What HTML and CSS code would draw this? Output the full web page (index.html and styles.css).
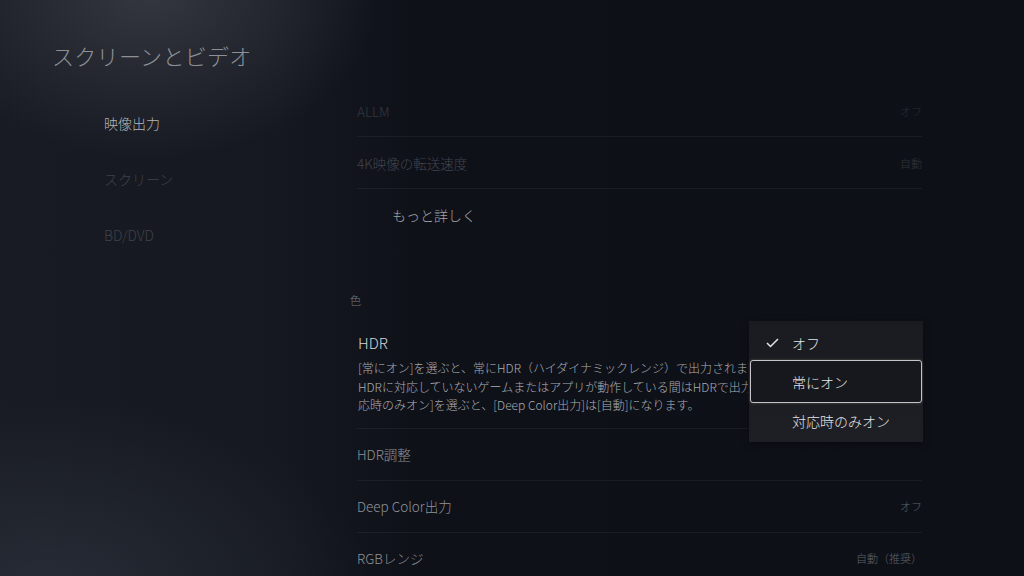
FILE: index.html
```html
<!DOCTYPE html>
<html lang="ja">
<head>
  <meta charset="UTF-8" />
  <meta name="viewport" content="width=device-width, initial-scale=1.0"/>
  <title>スクリーンとビデオ</title>
  <link rel="stylesheet" href="styles.css">
</head>
<body>

  <!-- Left side: title and sections -->
  <aside class="sidebar">
    <h1 class="page-title">スクリーンとビデオ</h1>
    <nav class="side-nav">
      <div class="side-item active">映像出力</div>
      <div class="side-item">スクリーン</div>
      <div class="side-item">BD/DVD</div>
    </nav>
  </aside>

  <!-- Settings list -->
  <main class="settings">
    <div class="row faded-2">
      <span class="label">ALLM</span>
      <span class="value">オフ</span>
    </div>
    <div class="row faded-1">
      <span class="label">4K映像の転送速度</span>
      <span class="value">自動</span>
    </div>
    <div class="row more">
      <span class="label">もっと詳しく</span>
    </div>

    <div class="section-title">色</div>

    <div class="hdr-block">
      <div class="hdr-title">HDR</div>
      <p class="hdr-desc">[常にオン]を選ぶと、常にHDR（ハイダイナミックレンジ）で出力されます。<br>HDRに対応していないゲームまたはアプリが動作している間はHDRで出力されません。[対<br>応時のみオン]を選ぶと、[Deep Color出力]は[自動]になります。</p>

      <!-- HDR dropdown -->
      <div class="dropdown">
        <div class="option checked">
          <svg class="check" width="13" height="10" viewBox="0 0 13 10">
            <polyline points="1,5 4.5,8.5 12,1" fill="none" stroke="#e4e4e6" stroke-width="1.5"/>
          </svg>
          オフ
        </div>
        <div class="option selected">常にオン</div>
        <div class="option">対応時のみオン</div>
      </div>
    </div>

    <div class="row">
      <span class="label">HDR調整</span>
    </div>
    <div class="row">
      <span class="label">Deep Color出力</span>
      <span class="value">オフ</span>
    </div>
    <div class="row">
      <span class="label">RGBレンジ</span>
      <span class="value">自動（推奨）</span>
    </div>
  </main>

</body>
</html>
```

FILE: styles.css
```css
html, body {
  height: 100%;
}

body {
  margin: 0;
  overflow: hidden;
  display: flex;
  font-family: "Noto Sans CJK JP", "Noto Sans", sans-serif;
  font-weight: 300;
  color: #8e9197;
  background:
    radial-gradient(ellipse 230px 170px at 150px -10px, rgba(78, 80, 88, 0.55), transparent),
    radial-gradient(ellipse 320px 190px at 50px 590px, rgba(52, 58, 70, 0.55), transparent),
    linear-gradient(to right, #181b23 0, #151820 280px, #0f1119 420px, #0e1018 100%);
}

/* ---------- sidebar ---------- */

.sidebar {
  width: 340px;
  flex-shrink: 0;
}

.page-title {
  margin: 40px 0 0 52px;
  font-size: 22px;
  font-weight: 300;
  line-height: 30px;
  color: #8d9098;
  letter-spacing: 0.3px;
}

.side-nav {
  margin: 42px 0 0 104px;
  display: flex;
  flex-direction: column;
  gap: 34px;
}

.side-item {
  font-size: 14px;
  line-height: 22px;
  color: #3f424a;
}

.side-item.active {
  color: #b3b6bb;
}

/* ---------- settings list ---------- */

.settings {
  width: 565px;
  margin-left: 17px;
  padding-top: 85px;
}

.row {
  height: 51px;
  display: flex;
  align-items: center;
  justify-content: space-between;
  border-bottom: 1px solid rgba(255, 255, 255, 0.05);
}

.label {
  font-size: 13.5px;
  color: #8e9197;
}

.value {
  font-size: 11px;
  color: #5d6066;
}

.faded-2 .label { color: #34363e; }
.faded-2 .value { color: #2a2c33; }
.faded-1 .label { color: #42444c; }
.faded-1 .value { color: #33353c; }

.row.more {
  border-bottom: none;
  padding-left: 35px;
}

.row.more .label {
  font-size: 14px;
  color: #a2a5aa;
}

.section-title {
  margin: 52px 0 0 -7px;
  font-size: 11px;
  line-height: 16px;
  color: #74777d;
}

/* ---------- HDR block ---------- */

.hdr-block {
  position: relative;
  margin-top: 16px;
  padding: 8px 0 13px 1px;
  border-bottom: 1px solid rgba(255, 255, 255, 0.05);
}

.hdr-title {
  font-size: 15px;
  line-height: 22px;
  color: #d3d5d9;
}

.hdr-desc {
  width: 390px;
  margin: 5px 0 0;
  font-size: 12px;
  line-height: 18.5px;
  color: #a9acb1;
  white-space: nowrap;
  overflow: hidden;
}

.dropdown {
  position: absolute;
  top: -3px;
  right: -1px;
  width: 174px;
  padding: 2px 0;
  box-sizing: border-box;
  background: linear-gradient(to bottom, #1a1b20, #1e1f24);
  box-shadow: 0 2px 8px rgba(0, 0, 0, 0.4);
}

.option {
  position: relative;
  height: 39px;
  display: flex;
  align-items: center;
  padding-left: 43px;
  font-size: 14px;
  color: #e2e3e6;
}

.option.selected {
  height: 43px;
  margin: -2px 1px;
  padding-left: 41px;
  box-sizing: border-box;
  border: 1.5px solid #c4c4c8;
  border-radius: 3px;
  background: #17181d;
  box-shadow: 0 0 3px rgba(200, 180, 150, 0.35);
}

.check {
  position: absolute;
  left: 17px;
  top: 15px;
}
```
